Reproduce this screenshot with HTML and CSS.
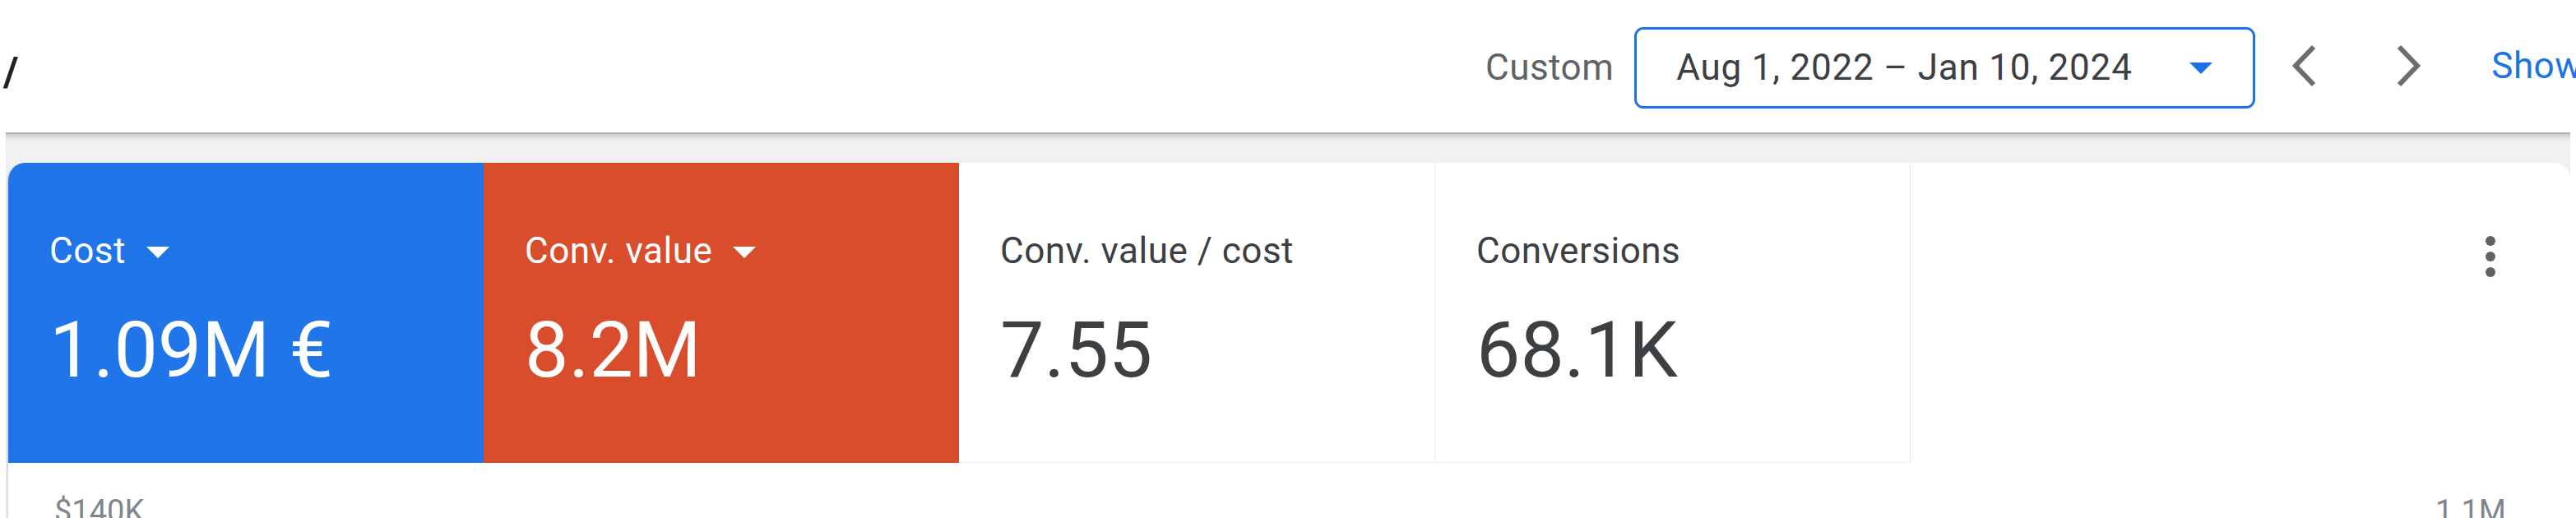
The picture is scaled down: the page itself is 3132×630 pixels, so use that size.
FILE: index.html
```html
<!DOCTYPE html>
<html lang="en">
<head>
<meta charset="utf-8">
<title>Overview</title>
<link rel="stylesheet" href="styles.css">
</head>
<body>
<header class="topbar">
  <div class="crumb">/</div>
  <div class="controls">
    <span class="range-label">Custom</span>
    <div class="range-box">
      <span class="range-text">Aug 1, 2022 – Jan 10, 2024</span>
      <svg class="drop" viewBox="0 0 28 14" width="28" height="14"><polygon points="0,0 28,0 14,14" fill="#1a73e8"/></svg>
    </div>
    <svg class="chev chev-prev" viewBox="0 0 30 52" width="30" height="52"><polyline points="27,3 5,26 27,49" fill="none" stroke="#6b6e72" stroke-width="6"/></svg>
    <svg class="chev chev-next" viewBox="0 0 30 52" width="30" height="52"><polyline points="3,3 25,26 3,49" fill="none" stroke="#6b6e72" stroke-width="6"/></svg>
    <span class="show">Show</span>
  </div>
</header>
<main class="stage">
  <section class="card">
    <div class="tiles">
      <div class="tile tile-blue">
        <div class="tile-label">Cost <svg class="tri" viewBox="0 0 28 14" width="28" height="14"><polygon points="0,0 28,0 14,14" fill="#fff"/></svg></div>
        <div class="tile-value">1.09M €</div>
      </div>
      <div class="tile tile-red">
        <div class="tile-label">Conv. value <svg class="tri" viewBox="0 0 28 14" width="28" height="14"><polygon points="0,0 28,0 14,14" fill="#fff"/></svg></div>
        <div class="tile-value">8.2M</div>
      </div>
      <div class="tile tile-plain">
        <div class="tile-label">Conv. value / cost</div>
        <div class="tile-value">7.55</div>
      </div>
      <div class="tile tile-plain tile-last">
        <div class="tile-label">Conversions</div>
        <div class="tile-value">68.1K</div>
      </div>
      <div class="tile-rest">
        <svg class="kebab" viewBox="0 0 12 50" width="12" height="50"><circle cx="6" cy="6" r="6" fill="#5f6368"/><circle cx="6" cy="25" r="6" fill="#5f6368"/><circle cx="6" cy="44" r="6" fill="#5f6368"/></svg>
      </div>
    </div>
    <div class="axis">
      <span>$140K</span>
      <span>1.1M</span>
    </div>
  </section>
</main>
</body>
</html>
```
FILE: styles.css
```css
html, body {
  margin: 0;
  padding: 0;
}
body {
  width: 3132px;
  height: 630px;
  overflow: hidden;
  background: #ffffff;
  font-family: Roboto, "Liberation Sans", Arial, sans-serif;
  color: #3c4043;
}

/* ---------- top bar ---------- */
.topbar {
  display: grid;
  grid-template-columns: 1806px auto;
  align-items: center;
  height: 161px;
  overflow: hidden;
}
.crumb {
  padding-left: 4px;
  padding-top: 14px;
  font-size: 50px;
  font-weight: 700;
  color: #202124;
}
.controls {
  display: flex;
  align-items: center;
  white-space: nowrap;
  padding-top: 3px;
}
.range-label {
  font-size: 44px;
  letter-spacing: 0.5px;
  color: #5f6368;
}
.range-box {
  box-sizing: border-box;
  width: 755px;
  height: 99px;
  margin-left: 25px;
  padding: 0 49px 0 48px;
  border: 3px solid #1a73e8;
  border-radius: 11px;
  display: flex;
  align-items: center;
  justify-content: space-between;
}
.range-text {
  font-size: 44px;
  letter-spacing: 0.8px;
  color: #3c4043;
}
.drop {
  display: block;
  margin-top: 2px;
}
.chev {
  display: block;
  flex: none;
}
.chev-prev {
  margin-left: 44px;
  margin-top: -4px;
}
.chev-next {
  margin-left: 98px;
  margin-top: -4px;
}
.show {
  margin-left: 85px;
  margin-top: -4px;
  font-size: 44px;
  letter-spacing: 0.5px;
  color: #1a73e8;
}

/* ---------- stage ---------- */
.stage {
  margin-left: 7px;
  width: 3118px;
  height: 469px;
  box-sizing: border-box;
  padding-top: 35px;
  background: #f1f1f4;
  border-top: 2px solid #b2b2b6;
  box-shadow: inset 0 9px 8px -7px rgba(0, 0, 0, 0.22);
}
.card {
  margin-left: 1px;
  width: 3117px;
  height: 440px;
  box-sizing: border-box;
  background: #ffffff;
  border-left: 2px solid #dcdce0;
  border-radius: 22px 20px 0 0;
  overflow: hidden;
}
.tiles {
  display: flex;
  height: 365px;
}
.tile {
  box-sizing: border-box;
  width: 578px;
  flex: none;
  padding: 83px 0 0 50px;
}
.tile-blue {
  background: #2076e9;
  color: #ffffff;
}
.tile-red {
  background: #d84d2b;
  color: #ffffff;
}
.tile-plain {
  border-bottom: 1px solid #ececf0;
  color: #3c4043;
}
.tile-last {
  width: 579px;
  border-left: 1px solid #efeff2;
  border-right: 1px solid #e6e6ea;
}
.tile-label {
  display: flex;
  align-items: center;
  gap: 25px;
  height: 48px;
  font-size: 44px;
  letter-spacing: 0.5px;
  line-height: 48px;
  white-space: nowrap;
}
.tri {
  display: block;
  margin-top: 4px;
}
.tile-value {
  margin-top: 47px;
  font-size: 95px;
  line-height: 100px;
  white-space: nowrap;
}
.tile-rest {
  flex: 1;
  display: flex;
  justify-content: flex-end;
  align-items: flex-start;
  padding: 89px 91px 0 0;
}
.kebab {
  display: block;
}

/* ---------- chart axis ---------- */
.axis {
  display: flex;
  justify-content: space-between;
  padding: 38px 78px 0 56px;
  font-size: 38px;
  line-height: 42px;
  color: #80868b;
}
```
